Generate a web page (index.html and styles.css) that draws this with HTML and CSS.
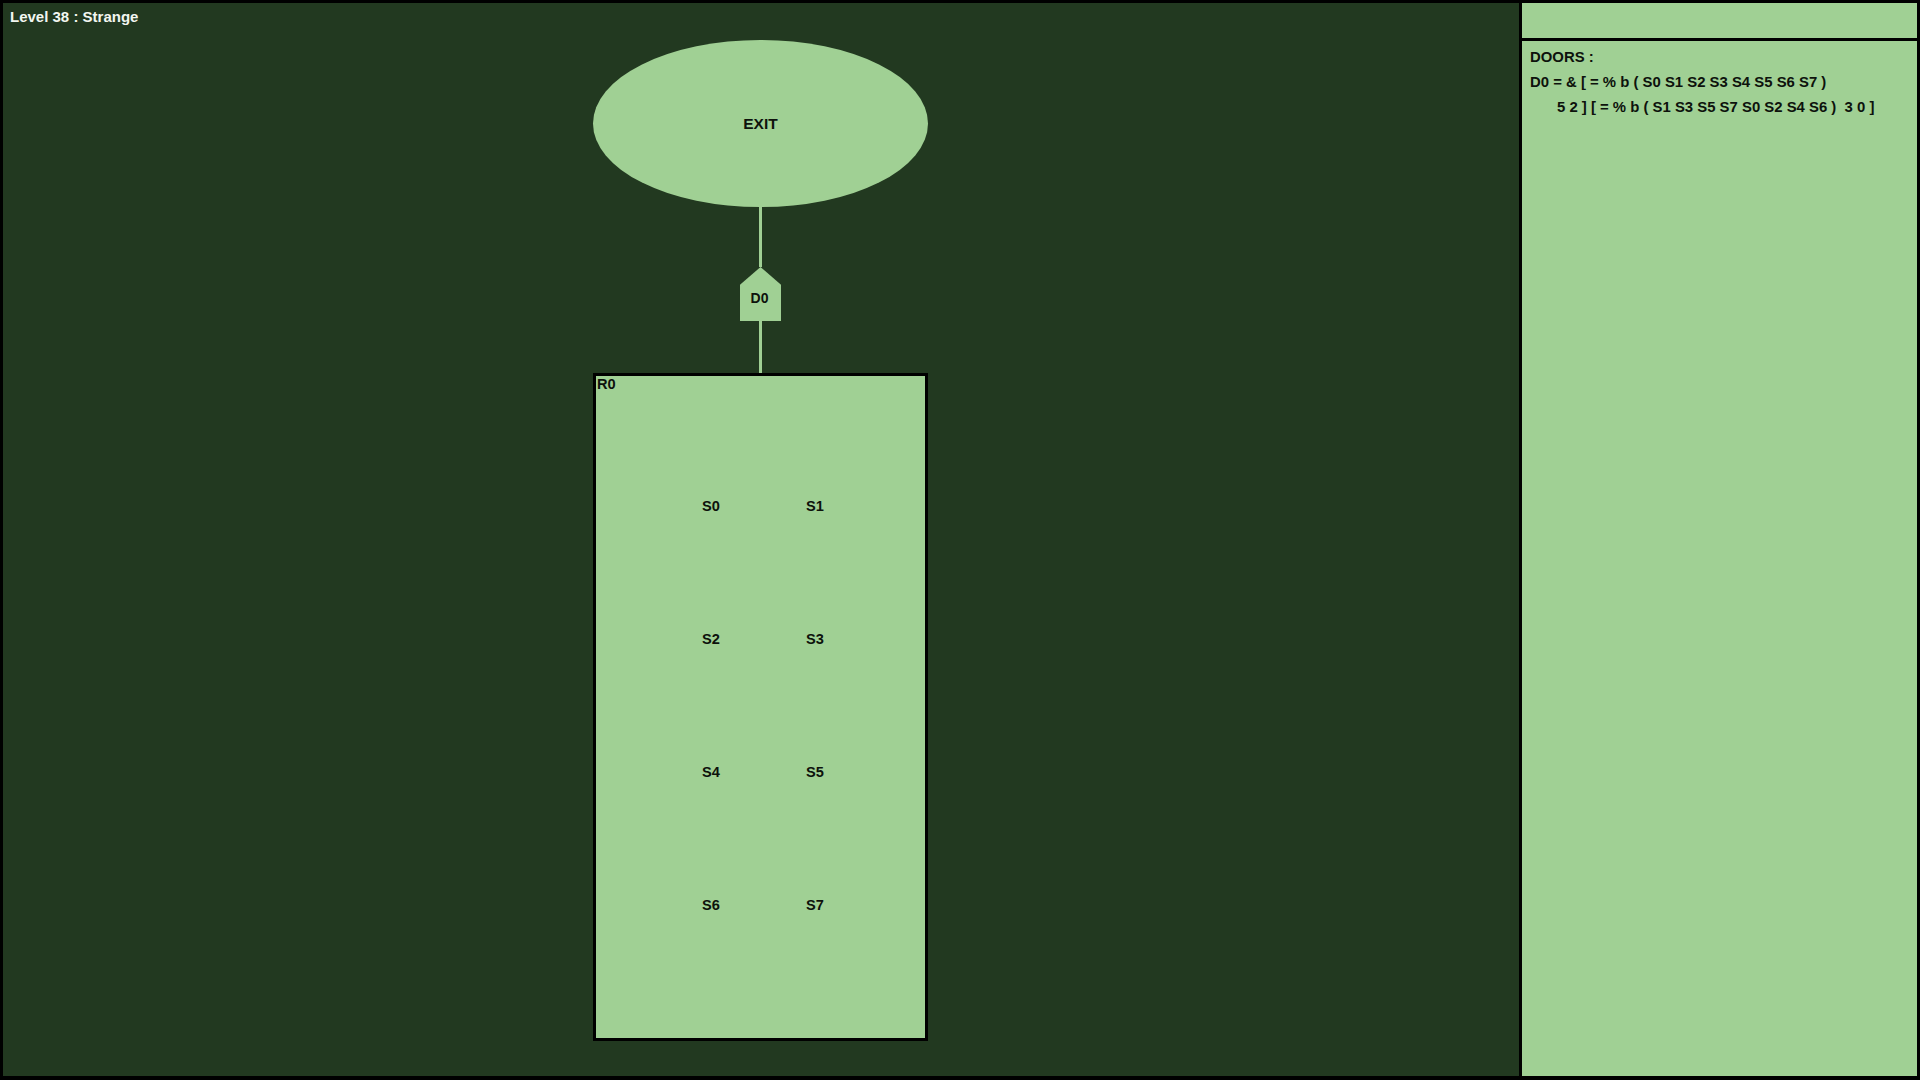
FILE: index.html
```html
<!DOCTYPE html>
<html lang="en">
  <head>
    <meta charset="UTF-8" />
    <title>Level 38 : Strange</title>
    <link rel="stylesheet" href="styles.css">
  </head>
  <body>
    <main class="canvas">
      <div class="level-title">Level 38 : Strange</div>

      <div class="diagram">
        <div class="exit">EXIT</div>
        <div class="wire wire-top"></div>
        <div class="door">D0</div>
        <div class="wire wire-bottom"></div>
        <div class="room">
          <div class="room-name">R0</div>
          <div class="switches">
            <span>S0</span><span>S1</span>
            <span>S2</span><span>S3</span>
            <span>S4</span><span>S5</span>
            <span>S6</span><span>S7</span>
          </div>
        </div>
      </div>
    </main>

    <aside class="sidebar">
      <div class="sidebar-head"></div>
      <div class="sidebar-body">
        <div class="doors-title">DOORS :</div>
        <div class="door-rule">D0 = &amp; [ = % b ( S0 S1 S2 S3 S4 S5 S6 S7 )</div>
        <div class="door-rule indent">5 2 ] [ = % b ( S1 S3 S5 S7 S0 S2 S4 S6 )&nbsp; 3 0 ]</div>
      </div>
    </aside>
  </body>
</html>
```

FILE: styles.css
```css
:root {
  --dark: #223920;
  --light: #a0d094;
  --ink: #0d120c;
  --frame: #000000;
}

* {
  margin: 0;
  padding: 0;
  box-sizing: border-box;
}

body {
  width: 1920px;
  height: 1080px;
  overflow: hidden;
  background: var(--frame);
  display: grid;
  grid-template-columns: 1516px 395px;
  gap: 3px;
  padding: 3px 3px 4px 3px;
  font-family: "Liberation Sans", Arial, sans-serif;
  font-weight: bold;
  color: var(--ink);
}

.canvas {
  position: relative;
  background: var(--dark);
}

.level-title {
  padding: 5px 7px;
  font-size: 15px;
  line-height: 18px;
  color: #f2f6f0;
}

/* the level diagram lives on a free canvas */
.diagram {
  position: absolute;
  left: 590px;
  top: 37px;
  width: 335px;
  display: flex;
  flex-direction: column;
  align-items: center;
}

.exit {
  width: 335px;
  height: 167px;
  border-radius: 50%;
  background: var(--light);
  display: flex;
  align-items: center;
  justify-content: center;
  font-size: 15.5px;
}

.wire {
  width: 3px;
  background: var(--light);
}

.wire-top {
  height: 60px;
}

.wire-bottom {
  height: 52px;
}

.door {
  width: 41px;
  height: 54px;
  background: var(--light);
  clip-path: polygon(50% 0, 100% 33%, 100% 100%, 0 100%, 0 33%);
  display: flex;
  align-items: center;
  justify-content: center;
  padding-top: 8px;
  padding-right: 2px;
  font-size: 14px;
}

.room {
  width: 335px;
  height: 668px;
  border: 3px solid var(--frame);
  background: var(--light);
  font-size: 14.6px;
}

.room-name {
  padding: 0 1px;
  line-height: 17px;
}

.switches {
  display: grid;
  grid-template-columns: 104px 104px;
  grid-auto-rows: 133px;
  align-items: center;
  justify-items: center;
  margin-top: 46px;
  margin-left: 63px;
}

.sidebar {
  display: flex;
  flex-direction: column;
  gap: 3px;
}

.sidebar-head {
  height: 35px;
  background: var(--light);
}

.sidebar-body {
  flex: 1;
  background: var(--light);
  padding: 4px 8px;
  font-size: 14.9px;
  line-height: 25px;
  white-space: nowrap;
}

.indent {
  padding-left: 27px;
}
```
